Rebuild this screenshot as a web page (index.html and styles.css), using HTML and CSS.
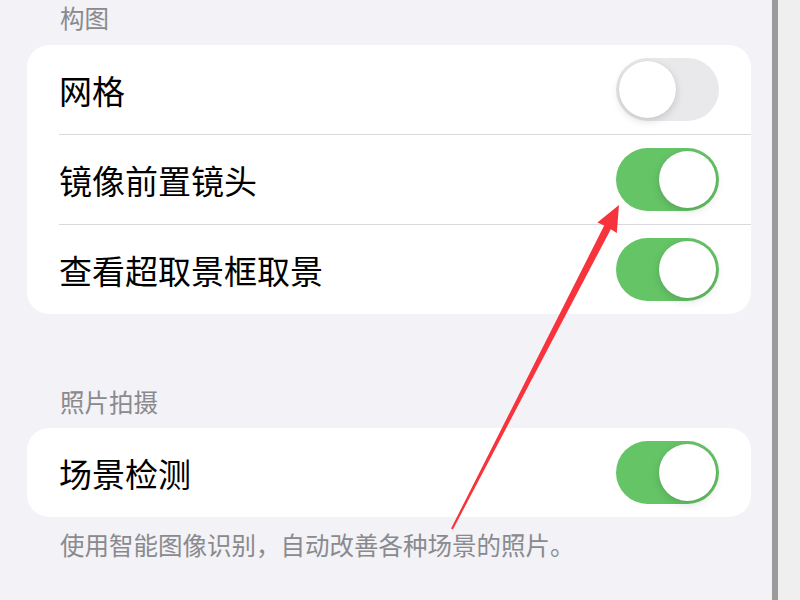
FILE: index.html
```html
<!DOCTYPE html>
<html lang="zh-CN">
<head>
<meta charset="utf-8">
<link rel="stylesheet" href="styles.css">
</head>
<body>
<div class="page">
  <div class="main">
    <div class="sec-header first">构图</div>
    <div class="card">
      <div class="row sep">
        <span class="label">网格</span>
        <span class="toggle"><span class="knob"></span></span>
      </div>
      <div class="row sep">
        <span class="label">镜像前置镜头</span>
        <span class="toggle on"><span class="knob"></span></span>
      </div>
      <div class="row">
        <span class="label">查看超取景框取景</span>
        <span class="toggle on"><span class="knob"></span></span>
      </div>
    </div>
    <div class="sec-header second">照片拍摄</div>
    <div class="card">
      <div class="row single">
        <span class="label">场景检测</span>
        <span class="toggle on"><span class="knob"></span></span>
      </div>
    </div>
    <div class="sec-footer">使用智能图像识别，自动改善各种场景的照片。</div>
  </div>
  <div class="bar"></div>
  <div class="strip"></div>
  <svg class="arrow" width="800" height="600" viewBox="0 0 800 600">
    <polygon points="619,205 616.8,233 610.8,229.2 452.9,529.5 451.1,528.5 604.2,225.6 597.4,222.6" fill="#f7333b"/>
  </svg>
</div>
</body>
</html>
```
FILE: styles.css
```css
html, body {
  margin: 0;
  padding: 0;
}
body {
  width: 800px;
  height: 600px;
  overflow: hidden;
  font-family: "Noto Sans CJK SC", "Noto Sans", sans-serif;
}
.page {
  position: relative;
  display: flex;
  width: 800px;
  height: 600px;
}
.main {
  width: 772px;
  background: #f2f2f7;
  padding: 0 21px 0 27px;
  box-sizing: border-box;
}
.bar {
  width: 6px;
  background: #9b9b9c;
}
.strip {
  flex: 1;
  background: #efeff0;
}
.sec-header {
  font-size: 24.5px;
  line-height: 36px;
  color: #8a8a8e;
  padding-left: 33px;
}
.sec-header.first {
  padding-bottom: 9px;
}
.sec-header.second {
  margin-top: 70px;
  padding-bottom: 8px;
}
.sec-footer {
  font-size: 24.5px;
  line-height: 36px;
  color: #8a8a8e;
  padding: 10px 0 0 33px;
}
.card {
  background: #ffffff;
  border-radius: 22px;
  overflow: hidden;
}
.row {
  height: 89px;
  display: flex;
  align-items: center;
  justify-content: space-between;
  margin-left: 32px;
  padding-right: 32px;
  box-sizing: border-box;
}
.row.sep {
  border-bottom: 1px solid #d9d9dd;
  height: 90px;
}
.row.single {
  height: 89px;
}
.label {
  font-size: 33px;
  line-height: 40px;
  color: #000;
}
.toggle {
  position: relative;
  width: 103px;
  height: 63px;
  border-radius: 32px;
  background: #e9e9eb;
  flex: none;
}
.toggle.on {
  background: #65c466;
}
.knob {
  position: absolute;
  top: 3px;
  left: 3px;
  width: 57px;
  height: 57px;
  border-radius: 50%;
  background: #fff;
  box-shadow: 0 3px 8px rgba(0,0,0,0.15), 0 0 1px rgba(0,0,0,0.12);
}
.toggle.on .knob {
  left: auto;
  right: 3px;
}
.arrow {
  position: absolute;
  left: 0;
  top: 0;
  pointer-events: none;
}
```
